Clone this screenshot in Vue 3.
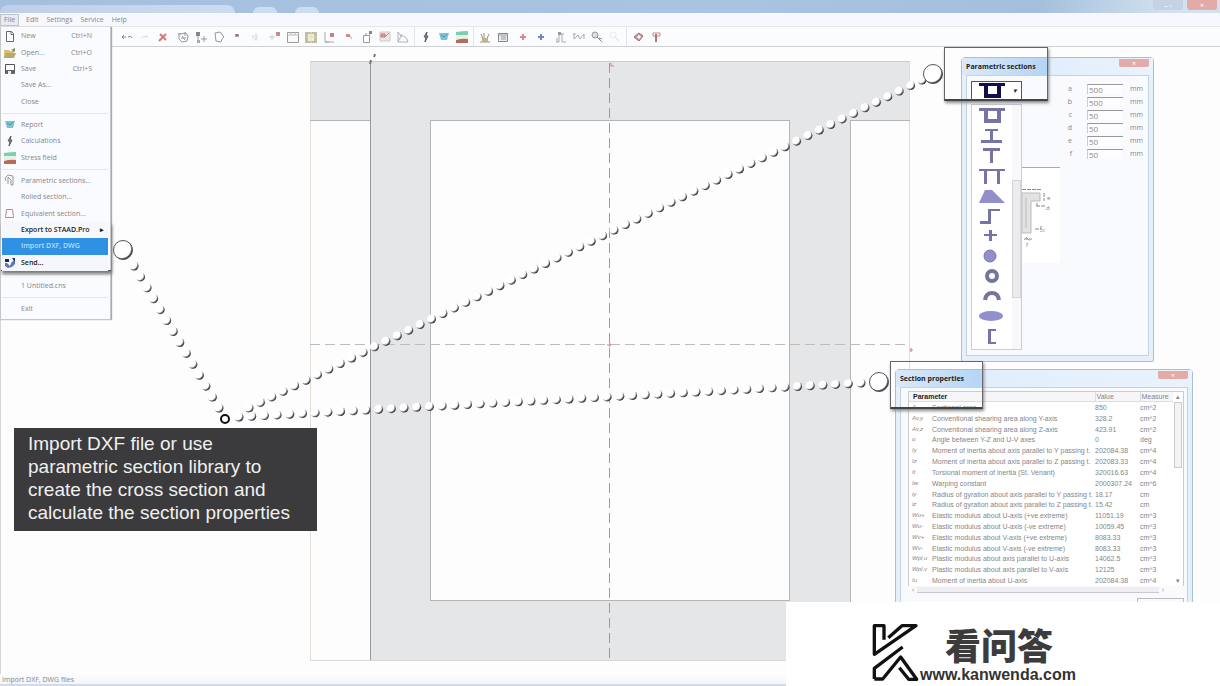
<script setup>
const menus = ['File', 'Edit', 'Settings', 'Service', 'Help']

const fileGroups = [
  [
    { label: 'New', key: 'Ctrl+N', icon: 'new' },
    { label: 'Open...', key: 'Ctrl+O', icon: 'open' },
    { label: 'Save', key: 'Ctrl+S', icon: 'save' },
    { label: 'Save As...' },
    { label: 'Close' },
  ],
  [
    { label: 'Report', icon: 'report' },
    { label: 'Calculations', icon: 'bolt' },
    { label: 'Stress field', icon: 'field' },
  ],
  [
    { label: 'Parametric sections...', icon: 'param' },
    { label: 'Rolled section...' },
    { label: 'Equivalent section...', icon: 'equiv' },
    { label: 'Export to STAAD.Pro', strong: true, sub: true },
    { label: 'Import DXF, DWG', active: true },
    { label: 'Send...', icon: 'send', strong: true },
  ],
  [{ label: '1 Untitled.cns' }],
  [{ label: 'Exit' }],
]

const glyphs = {
  new: '<path d="M3.500 2.500h5l2 2v8h-7z" fill="#fff" stroke="#666"/><path d="M8 2.500v3h3" fill="none" stroke="#666"/>',
  open: '<path d="M1 4h5l1 1h4v7H1z" fill="#d9c173"/><path d="M3 7h10l-2 5H1z" fill="#b8aa68"/><path d="M8 4l4-2v4z" fill="#8b9159"/>',
  save: '<path d="M2.500 2.500h9v9h-9z" fill="#fff" stroke="#555"/><path d="M3 8h8v4H3z" fill="#666"/><path d="M5 9h3v3H5z" fill="#eee"/>',
  report: '<path d="M2 3h10l-2 7H4z" fill="#7cc4d2"/><path d="M4 5l3 2 3-3" stroke="#4498ab" fill="none"/>',
  bolt: '<path d="M8 2L5 7h2l-1 5 3-6H7z" fill="#aaa" stroke="#555"/>',
  field: '<path d="M1 2q6-1 12-1v4H1z" fill="#79cfb0"/><path d="M1 5h12v4H1z" fill="#e6f2e6"/><path d="M1 10q6-2 12-1v4H1z" fill="#b96a58"/>',
  param: '<path d="M3 7l-1-3 3-3 5 1v9H8V6L5 3v7" fill="none" stroke="#999"/>',
  equiv: '<path d="M3.500 2.500h6l1 8h-8z" fill="#fff" stroke="#c58089"/>',
  send: '<path d="M2 7h6l4-4v5l-3 3-4 1-3-2z" fill="#5c7bb8"/><path d="M2 3h4v3H2zM9 2h3v4z" fill="#1d2858"/><path d="M4 7h4l-1 3z" fill="#fff"/>',
  undo: '<path d="M3 7h3M4 5l-2 2 2 2M8 7q3-2 4 1" stroke="#888" fill="none"/>',
  redo: '<path d="M3 8q3-3 6-1M9 5v3" stroke="#ddd" fill="none"/>',
  del: '<path d="M4 4l6 6M10 4l-7 7" stroke="#d27a74" stroke-width="2"/>',
  rot: '<path d="M3 4l7-1 2 3-1 5-5 1-3-3zM2 4h3M9 2v4M5 8h5M6 6l3 4" stroke="#999" fill="none"/>',
  nodes: '<path d="M2 2h4v4H2z" fill="#888"/><path d="M4 6v7M10 6v6M7 9h6" stroke="#999" fill="none"/><path d="M3 10h3v3H3z" fill="#aaa"/>',
  poly: '<path d="M3 3l5-1 4 5-2 2-1 3-5-1z" stroke="#999" fill="none"/>',
  dot: '<path d="M5 4h4v3H5z" fill="#aaa"/><path d="M6 4h2v2H6z" fill="#a66"/>',
  faint: '<path d="M4 6h5v3H6zM8 3v8" stroke="#ddd" fill="none"/>',
  arrowdot: '<path d="M1 7h6M4 5v5" stroke="#ccc" fill="none"/><path d="M8 2h4v4H8z" fill="#c98b91"/>',
  frame: '<path d="M1.500 2.500h11v10h-11z" fill="#fafafa" stroke="#999"/><path d="M1 5h12M5 2v3M9 2v3" stroke="#bbb"/>',
  grid: '<path d="M1 2h12v11H1z" fill="#c0bea5"/><path d="M4 4h6v7H4z" fill="#f2f0d4"/><path d="M2 7h10M7 2v11" stroke="#dedcc2"/>',
  corner: '<path d="M3 2v10h9M3 12h4" stroke="#aaa" fill="none"/><path d="M8 3h4v4H8z" fill="#c98084"/>',
  small: '<path d="M4 4h4v3H4z" fill="#cf8a8a"/><path d="M8 6l2 3" stroke="#aaa"/>',
  box: '<path d="M3.500 5.500h6v7h-6zM6 5V3M9 5l2-2" fill="#fff" stroke="#999"/><path d="M9 1h3v3H9z" fill="#888"/>',
  sheet: '<path d="M2 2h10v9H2z" fill="#f0e6e4" stroke="#ccc"/><path d="M3 4h4v3H3zM7 7l4-4" fill="#d99" stroke="#cb7777"/>',
  tri: '<path d="M2 2v10h10q-2-7-7-6zM2 12l4-8" fill="none" stroke="#b3b3b3"/>',
  bars: '<path d="M2 12h10M3 4l3 7M6 3v7M8 11l3-7" stroke="#99937a" fill="none"/><path d="M4 8h6v4H4z" fill="#c3b487"/>',
  table: '<path d="M2.500 3.500h9v8h-9z" fill="#eee" stroke="#888"/><path d="M2 5h10M5 7h5M5 9h5" stroke="#999"/>',
  red: '<path d="M7 4v6M4 7h6" stroke="#dd8a8a" stroke-width="2"/>',
  blue: '<path d="M7 4v6M4 7h6" stroke="#7486bd" stroke-width="2"/>',
  dims: '<path d="M2 12h3V4h5M8 4v8h4M3 8v4" stroke="#aaa" fill="none"/><path d="M4 2h3v3H4z" fill="#999"/>',
  wave: '<path d="M2 4v5M2 9l4-4 2 4 4-5v5M1 4h3" stroke="#aaa" fill="none"/>',
  zoomin: '<circle cx="5" cy="5" r="3" fill="#ddd" stroke="#999"/><path d="M7 7l5 5M9 8l3 1" stroke="#888"/>',
  zoomout: '<circle cx="5" cy="5" r="3" fill="none" stroke="#ececec"/><path d="M7 7l4 4" stroke="#ddd"/>',
  book: '<path d="M3 7l5-4 4 3-4 5z" fill="#c49aa0" stroke="#a06a74"/><path d="M6 7l2-2 2 2-2 2z" fill="#fff"/>',
  help: '<path d="M4 3h7v3H8M4 3v3h3" stroke="#c58d88" fill="none"/><path d="M7 4v8" stroke="#b5746e" stroke-width="2"/>',
}

const tools = [
  { names: ['undo', 'redo', 'del'] },
  { names: ['rot', 'nodes', 'poly', 'dot', 'faint'] },
  { names: ['arrowdot', 'frame', 'grid', 'corner'] },
  { names: ['small', 'box', 'sheet', 'tri'] },
  { names: ['bolt', 'report', 'field'], line: true },
  { names: ['bars', 'table'], line: true },
  { names: ['red', 'blue'] },
  { names: ['dims', 'wave', 'zoomin', 'zoomout'] },
  { names: ['book', 'help'], line: true },
]

const shapes = [
  { name: 'Box', d: '<path d="M1 1h26v3h-4v12H6V4H1zM10 4v8h9V4z" fill-rule="evenodd"/>' },
  { name: 'I section', d: '<path d="M7 2h13v2h-5v9h9v3H3v-3h9V4H7z"/>' },
  { name: 'T section', d: '<path d="M5 1h17v3h-7v12h-3V4H5z"/>' },
  { name: 'Double T', d: '<path d="M1 2h26v2h-5v13h-3V4H9v13H6V4H1z"/>' },
  { name: 'Trapezoid', d: '<path d="M7 3h7l13 13H1z" fill="#9290cc"/>' },
  { name: 'Z section', d: '<path d="M10 2h12v2h-9v13H2v-3h8z"/>' },
  { name: 'Cross', d: '<path d="M11 3h3v4h5v2h-5v5h-3V9H6V7h5z"/>' },
  { name: 'Circle', d: '<circle cx="12" cy="9" r="6" fill="#9290cc" stroke="#74749f"/>' },
  { name: 'Ring', d: '<circle cx="14" cy="9" r="5" fill="none" stroke="#74749f" stroke-width="4"/>' },
  { name: 'Arc', d: '<path d="M7 13q1-7 7-7t7 7" fill="none" stroke="#74749f" stroke-width="4"/>' },
  { name: 'Ellipse', d: '<ellipse cx="13" cy="9" rx="12" ry="5" fill="#9290cc"/>' },
  { name: 'Channel', d: '<path d="M10 2h8v2h-5v11h5v2h-8z"/>' },
]

const sizes = [
  ['a', '500'], ['b', '500'], ['c', '50'], ['d', '50'], ['e', '50'], ['f', '50'],
]

const props = [
  ['A', 'Sectional area', '850', 'cm^2'],
  ['Av,y', 'Conventional shearing area along Y-axis', '328.2', 'cm^2'],
  ['Av,z', 'Conventional shearing area along Z-axis', '423.91', 'cm^2'],
  ['α', 'Angle between Y-Z and U-V axes', '0', 'deg'],
  ['Iy', 'Moment of inertia about axis parallel to Y passing t.', '202084.38', 'cm^4'],
  ['Iz', 'Moment of inertia about axis parallel to Z passing t.', '202083.33', 'cm^4'],
  ['It', 'Torsional moment of inertia (St. Venant)', '320016.63', 'cm^4'],
  ['Iw', 'Warping constant', '2000307.24', 'cm^6'],
  ['iy', 'Radius of gyration about axis parallel to Y passing t.', '18.17', 'cm'],
  ['iz', 'Radius of gyration about axis parallel to Z passing t.', '15.42', 'cm'],
  ['Wu+', 'Elastic modulus about U-axis (+ve extreme)', '11051.19', 'cm^3'],
  ['Wu-', 'Elastic modulus about U-axis (-ve extreme)', '10059.45', 'cm^3'],
  ['Wv+', 'Elastic modulus about V-axis (+ve extreme)', '8083.33', 'cm^3'],
  ['Wv-', 'Elastic modulus about V-axis (-ve extreme)', '8083.33', 'cm^3'],
  ['Wpl,u', 'Plastic modulus about axis parallel to U-axis', '14062.5', 'cm^3'],
  ['Wpl,v', 'Plastic modulus about axis parallel to V-axis', '12125', 'cm^3'],
  ['Iu', 'Moment of inertia about U-axis', '202084.38', 'cm^4'],
]

function beads(x1, y1, x2, y2, count) {
  return Array.from({ length: count + 1 }, (_, i) => ({
    x: x1 + ((x2 - x1) * i) / count,
    y: y1 + ((y2 - y1) * i) / count,
  }))
}

const dots = [
  ...beads(134, 266, 219, 408, 13),
  ...beads(249, 408, 922, 80, 59),
  ...beads(239, 417, 861, 383, 49),
]
</script>

<template>
  <div class="app">
    <header class="titlebar">
      <i class="glow wide"></i><i class="glow"></i><i class="glow"></i>
      <div class="winbtns">
        <button class="plain" aria-label="Minimize or restore">– ▫</button>
        <button class="close" aria-label="Close">×</button>
      </div>
    </header>
    <nav class="menubar">
      <button v-for="(m, i) in menus" :key="m" :class="{ open: i === 0 }">{{ m }}</button>
    </nav>
    <div class="toolbar">
      <div v-for="(g, i) in tools" :key="i" class="group" :class="{ line: g.line }">
        <button v-for="n in g.names" :key="n" :aria-label="n">
          <svg width="14" height="14" v-html="glyphs[n]"></svg>
        </button>
      </div>
    </div>

    <main class="stage">
      <svg class="drawing" aria-label="Cross section">
        <g fill="#e5e6e8">
          <rect x="310" y="14" width="600" height="59" />
          <rect x="370" y="14" width="60" height="599" />
          <rect x="790" y="14" width="60" height="599" />
          <rect x="370" y="553" width="480" height="60" />
        </g>
        <g fill="none" stroke-width="1" shape-rendering="crispEdges">
          <path d="M310.500 14V613M909.500 14V340" stroke="#e5dcd6" />
          <path d="M310 613.500H786" stroke="#d9dadb" />
          <path d="M310 14.500H910" stroke="#d0ccc4" />
          <path d="M310 73.500H370M850 73.500H910M430.500 73.500H789.500V553.500H430.500zM850.500 73V613" stroke="#b4b5b6" />
          <path d="M370.500 14V613" stroke="#999" />
          <path d="M310 297.500H910" stroke="#bcbcbc" stroke-dasharray="10 5" />
          <path d="M609.500 16V613" stroke="#9c9c9c" stroke-dasharray="10 5" />
        </g>
        <path d="M374 10l1-3M370 17l1-4" stroke="#777" stroke-width="2" />
        <path d="M611 16v3h3M607 298h4M610 296v4M910 303h3M911 301v4" stroke="#d77f7f" fill="none" />
      </svg>
    </main>
    <footer class="status">Import DXF, DWG files</footer>

    <div class="filemenu" role="menu">
      <div v-for="(g, i) in fileGroups" :key="i" class="mgroup">
        <button
          v-for="it in g"
          :key="it.label"
          role="menuitem"
          :class="{ active: it.active, strong: it.strong }"
        >
          <svg width="14" height="14" v-html="it.icon ? glyphs[it.icon] : ''"></svg>
          <span>{{ it.label }}</span>
          <kbd v-if="it.key">{{ it.key }}</kbd>
          <b v-if="it.sub">▸</b>
        </button>
      </div>
      <div class="lift"></div>
    </div>

    <section class="win param">
      <header><h2>Parametric sections</h2><button class="close" aria-label="Close">×</button></header>
      <div class="body">
        <div class="picker">
          <button class="current" aria-label="Section type" aria-haspopup="listbox">
            <svg width="28" height="18" v-html="shapes[0].d"></svg><i>▾</i>
          </button>
          <div class="listwrap">
            <ul role="listbox" aria-label="Section types">
              <li v-for="s in shapes" :key="s.name" role="option" :aria-label="s.name">
                <svg width="28" height="18" v-html="s.d"></svg>
              </li>
            </ul>
            <div class="vbar"><i></i></div>
          </div>
        </div>
        <svg class="preview" width="38" height="96">
          <path d="M0 0h38v96H0z" fill="#fff" />
          <path d="M0 .5h38" stroke="#aaa" />
          <path d="M0 26h18v8h-9v32H0z" fill="#e2e2e4" stroke="#bbb" />
          <path d="M4 31v30" stroke="#bbb" />
          <path d="M0 22.500h20M14 39h9M22 26v8M15 39v-3M13 62h6M2 72h8M19 59v6M4 70l4 4" stroke="#888" fill="none" stroke-dasharray="4 1" />
          <g fill="#777" font-size="6">
            <text x="25" y="33">e</text><text x="24" y="43">d</text><text x="20" y="65">c</text><text x="4" y="80">f</text>
          </g>
        </svg>
        <div class="fields">
          <label v-for="s in sizes" :key="s[0]">
            <span>{{ s[0] }}</span><input type="text" :value="s[1]" /><em>mm</em>
          </label>
        </div>
      </div>
    </section>

    <section class="win props">
      <header><h2>Section properties</h2><button class="close" aria-label="Close">×</button></header>
      <div class="body">
        <div class="grid">
          <table>
            <colgroup><col class="c-sym" /><col class="c-name" /><col class="c-val" /><col /></colgroup>
            <thead>
              <tr><th colspan="2" class="first">Parameter</th><th>Value</th><th>Measure</th></tr>
            </thead>
            <tbody>
              <tr v-for="r in props" :key="r[0]">
                <td class="sym">{{ r[0] }}</td><td>{{ r[1] }}</td><td>{{ r[2] }}</td><td>{{ r[3] }}</td>
              </tr>
            </tbody>
          </table>
          <div class="vbar"><span>▴</span><i></i><span>▾</span></div>
        </div>
        <div class="hbar"><span>‹</span><i></i><span>›</span></div>
        <div class="actions"><button aria-label="Close window"></button></div>
      </div>
    </section>

    <div class="frame one"></div>
    <div class="frame two"></div>

    <svg class="beads" aria-hidden="true">
      <defs>
        <radialGradient id="bead" cx="0.34" cy="0.34" r="0.68">
          <stop offset="0.66" stop-color="#fff" />
          <stop offset="0.82" stop-color="#85838c" />
          <stop offset="1" stop-color="#28252e" />
        </radialGradient>
        <radialGradient id="ball" cx="0.43" cy="0.43" r="0.58">
          <stop offset="0.8" stop-color="#fff" />
          <stop offset="0.92" stop-color="#55525c" />
          <stop offset="1" stop-color="#222" />
        </radialGradient>
      </defs>
      <circle v-for="(d, i) in dots" :key="i" :cx="d.x" :cy="d.y" r="4.500" fill="url(#bead)" />
      <g fill="url(#ball)" stroke="#55525a">
        <circle cx="123" cy="250" r="9.500" />
        <circle cx="933" cy="74" r="9.500" />
        <circle cx="879" cy="382" r="9.500" />
        <circle cx="225" cy="419" r="4" stroke="#111" stroke-width="2" />
      </g>
    </svg>

    <p class="caption">
      Import DXF file or use<br />parametric section library to<br />create the cross section and<br />calculate the section properties
    </p>

    <aside class="brand">
      <svg width="50" height="64" viewBox="0 0 150 192" fill="none" stroke="#111" stroke-width="10" stroke-linejoin="round">
        <path d="M42 56V14H13V100L138 14H96L55 50" />
        <path d="M13 174V142L98 78M13 174H38L92 108L140 175H116L88 140" />
      </svg>
      <div><strong>看问答</strong><a href="#">www.kanwenda.com</a></div>
    </aside>
  </div>
</template>

<style>
html, body { margin: 0; background: #fdfdfe; }
</style>

<style scoped>
* { box-sizing: border-box; }
.app {
  position: relative;
  display: flex;
  flex-direction: column;
  min-height: 100vh;
  overflow: hidden;
  font: 7px/10px "Open Sans", "Noto Sans", sans-serif;
  color: #858589;
  background: #fdfdfe;
}
button {
  padding: 0;
  border: 0;
  background: none;
  font: inherit;
  color: inherit;
}
svg { display: block; flex: none; }
.titlebar {
  display: flex;
  gap: 18px;
  align-items: flex-end;
  height: 13px;
  background: linear-gradient(90deg, #a5bfde 0, #a9c4e2 60%, #a4bfdc 85%, #d3e2f0 96%);
}
.glow { width: 24px; height: 6px; border-radius: 8px 8px 0 0; background: #ccdcf1; }
.glow.wide { width: 235px; height: 8px; background: linear-gradient(90deg, #bdd0e7, #cbdcf2); }
.winbtns { display: flex; gap: 4px; align-self: flex-start; margin-left: auto; padding-right: 3px; }
.winbtns button { height: 10px; width: 30px; line-height: 9px; }
.plain { color: #fff; background: #c3d3e4; border-radius: 0 0 3px 3px; }
.close { background: #e3aaa8; color: #fff; border-radius: 0 0 3px 3px; line-height: 7px; }
.menubar {
  display: flex;
  align-items: center;
  gap: 6px;
  height: 14px;
  background: #f7f8fd;
  border-bottom: 1px solid #e6e7ec;
}
.menubar button { padding: 0 1px; height: 12px; }
.menubar .open { padding: 0 3px; border: 1px solid #bfc3cc; background: #e8ebf2; }
.toolbar {
  display: flex;
  gap: 2px;
  height: 20px;
  padding-left: 118px;
  background: #fbfcfe;
  border-bottom: 1px solid #cfd0d4;
}
.group { display: flex; align-items: center; }
.group.line { padding-left: 2px; border-left: 1px solid #e3e4e8; }
.group button { width: 18px; height: 18px; padding: 2px; }
.stage { position: relative; flex: 1; border-left: 1px solid #d5d5da; }
.drawing { position: absolute; inset: 0; width: 100%; height: 100%; margin-left: -1px; }
.status {
  height: 12px;
  padding: 1px 2px 0;
  background: linear-gradient(#fcfdff, #f3f5fa);
  border-bottom: 2px solid #d3dae6;
}
.filemenu {
  position: absolute;
  top: 27px;
  left: 0;
  width: 111px;
  padding: 1px 2px 2px 1px;
  background: #fafbfe;
  border: 1px solid #c6c7cb;
  border-width: 0 1px 1px;
  box-shadow: 1px 0 1px #aaa;
}
.mgroup { display: grid; grid-auto-rows: 1fr; min-height: 16px; }
.mgroup:nth-child(1) { min-height: 82px; }
.mgroup:nth-child(2) { min-height: 49px; }
.mgroup:nth-child(3) { min-height: 98px; }
.mgroup + .mgroup { position: relative; margin-top: 7px; }
.mgroup + .mgroup::before {
  content: "";
  position: absolute;
  top: -4px;
  left: 0;
  right: 0;
  border-top: 1px solid #e5e6ea;
}
.mgroup button { display: flex; align-items: center; gap: 4px; padding: 0 16px 0 1px; text-align: left; white-space: nowrap; }
.mgroup kbd { margin-left: auto; font: inherit; }
.mgroup b { margin: 0 -12px 0 auto; }
.mgroup .strong { color: #222; font-weight: 600; background: #f6f7fb; z-index: 1; }
.mgroup .active { color: #b5ddff; background: #2f91e4; font-weight: 600; z-index: 1; }
.lift { position: absolute; top: 195px; left: 0; right: -1px; height: 49px; border-bottom: 1px solid #555; box-shadow: 1px 3px 3px #777; }
.win {
  position: absolute;
  display: flex;
  flex-direction: column;
  padding: 0 4px 5px;
  background: #e5f0fa;
  border: 1px solid #a9c0d4;
  border-radius: 4px 4px 2px 2px;
}
.win header {
  display: flex;
  flex: none;
  align-items: center;
  height: 17px;
  margin: 0 -4px;
  padding: 0 4px;
  background: linear-gradient(90deg, #dbe9f8 0, #b5d5f5 85px, #e1eefb 87px, #eaf3fc 100%);
}
.win h2 { margin: 0; font-size: 7px; font-weight: 700; color: #222; }
.win header .close { width: 30px; height: 8px; margin: -7px 0 0 auto; border-radius: 0 0 2px 2px; }
.win .body { flex: 1; min-height: 0; background: #f9fafe; border: 1px solid #c5d3e0; }
.param { left: 961px; top: 57px; width: 193px; height: 305px; }
.param .body { display: flex; padding: 5px 4px; }
.picker { width: 51px; display: flex; flex-direction: column; gap: 3px; }
.current { display: flex; align-items: center; gap: 7px; height: 20px; padding-left: 6px; border: 1px solid #555; background: #fff; color: #222; }
.current svg { fill: #12104a; }
.listwrap { flex: 1; display: flex; border: 1px solid #ccd; background: #fff; }
.listwrap ul { flex: 1; margin: 0; padding: 1px 0 0 6px; list-style: none; }
.listwrap li { height: 20px; padding-top: 1px; }
.listwrap svg { fill: #7574a4; }
.listwrap .vbar { width: 9px; padding-top: 75px; background: #f8f8fa; }
.listwrap .vbar i { display: block; height: 118px; background: #ececef; border: 1px solid #d5d5da; }
.preview { margin-top: 86px; font-family: "Open Sans", sans-serif; }
.fields { display: grid; grid-auto-rows: 1fr; height: 80px; padding-top: 1px; }
.fields label { display: flex; align-items: center; gap: 7px; }
.fields span { width: 12px; margin-right: 8px; text-align: right; }
.fields input { width: 36px; height: 10px; padding: 0 1px; border: 1px solid #ccc; border-top-color: #999; border-width: 1px 0 0 1px; background: #fdfdff; font: 8px/9px "Open Sans", sans-serif; color: #8a8a90; }
.fields em { font-style: normal; }
.props { left: 895px; top: 369px; width: 298px; height: 240px; }
.props .body { padding: 3px 3px 0 7px; }
.grid { display: flex; height: 195px; border: 1px solid #ccc; border-bottom: 0; background: #fff; }
table { flex: 1; width: 264px; height: 194px; border-collapse: collapse; table-layout: fixed; font-family: "Liberation Sans", Arial, sans-serif; }
.c-sym { width: 23px; }
.c-name { width: 163px; }
.c-val { width: 45px; }
th, td { padding: 0; text-align: left; font-weight: 400; white-space: nowrap; line-height: 9px; }
th { background: #f6f6f9; border-bottom: 1px solid #ddd; padding-left: 1px; }
th.first { padding-left: 4px; font-weight: 700; color: #222; }
th + th { border-left: 1px solid #ddd; }
td.sym { padding-left: 3px; font-style: italic; font-size: 6px; }
.grid .vbar { display: flex; flex-direction: column; align-items: center; width: 10px; line-height: 10px; }
.grid .vbar i { width: 8px; height: 66px; margin-bottom: auto; border: 1px solid #ccc; background: #f3f3f6; }
.hbar { display: flex; align-items: center; gap: 3px; height: 8px; padding: 0 20px 0 4px; background: #fafafd; }
.hbar i { flex: 1; height: 6px; background: #efeff3; border-bottom: 1px solid #c9c9ce; }
.actions { display: flex; justify-content: flex-end; padding-top: 4px; }
.actions button { width: 47px; height: 9px; border: 1px solid #bbb; }
.frame { position: absolute; border: 1px solid #66666c; border-bottom: 2px solid #444; box-shadow: 1px 2px 3px #888; }
.frame.one { left: 944px; top: 47px; width: 104px; height: 54px; }
.frame.two { left: 890px; top: 361px; width: 93px; height: 48px; }
.beads { position: absolute; inset: 0; width: 100%; height: 100%; pointer-events: none; }
.caption {
  position: absolute;
  left: 14px;
  top: 428px;
  margin: 0;
  padding: 4px 27px 7px 14px;
  background: #3b3b3d;
  color: #f0f0f0;
  font: 19px/23px "Liberation Sans", Arial, sans-serif;
  white-space: nowrap;
}
.brand {
  position: absolute;
  right: 0;
  bottom: 0;
  display: flex;
  width: 434px;
  height: 84px;
  padding: 19px 0 0 84px;
  background: #fff;
}
.brand div { display: flex; flex-direction: column; }
.brand strong { margin-left: 25px; font: 900 36px/46px "Noto Sans CJK SC", sans-serif; color: #3c3c3c; }
.brand a { font: bold 16px/16px "Liberation Sans", Arial, sans-serif; color: #333; text-decoration: none; }
</style>
